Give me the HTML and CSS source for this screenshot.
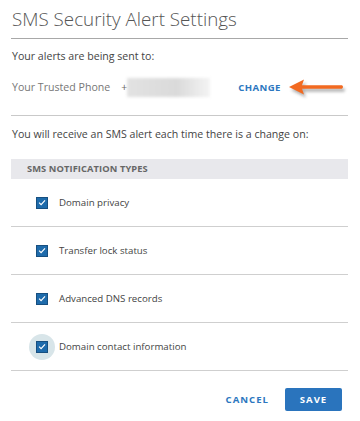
FILE: index.html
```html
<!DOCTYPE html>
<html>
<head>
<meta charset="utf-8">
<link rel="stylesheet" href="styles.css">
</head>
<body>
<div class="dialog">
  <h1 class="title">SMS Security Alert Settings</h1>
  <p class="lead">Your alerts are being sent to:</p>
  <div class="phone-row">
    <span class="phone-label">Your Trusted Phone</span>
    <span class="plus">+</span>
    <span class="phone-blur"></span>
    <a class="change">CHANGE</a>
    <svg class="arrow" width="62" height="24" viewBox="0 0 62 24">
      <defs>
        <filter id="sh" x="-20%" y="-50%" width="140%" height="200%">
          <feGaussianBlur stdDeviation="1.6"/>
        </filter>
      </defs>
      <g fill="#555" opacity="0.45" filter="url(#sh)" transform="translate(2,3)">
        <path d="M2 10 L17 2.5 L15 8.3 L55 8.3 Q57 10 55 11.7 L15 11.7 L17 17.5 Z"/>
      </g>
      <path fill="#f26a21" d="M2 10 L17 2.5 L15 8.3 L55 8.3 Q57 10 55 11.7 L15 11.7 L17 17.5 Z"/>
    </svg>
  </div>
  <p class="info">You will receive an SMS alert each time there is a change on:</p>
  <div class="types-head">SMS NOTIFICATION TYPES</div>
  <ul class="types">
    <li class="type"><span class="cb-wrap"><span class="cb"><svg viewBox="0 0 11 11" width="11" height="11"><path d="M2.3 5.6 L4.5 7.8 L8.8 3.2" fill="none" stroke="#fff" stroke-width="1.3"/></svg></span></span><span>Domain privacy</span></li>
    <li class="type"><span class="cb-wrap"><span class="cb"><svg viewBox="0 0 11 11" width="11" height="11"><path d="M2.3 5.6 L4.5 7.8 L8.8 3.2" fill="none" stroke="#fff" stroke-width="1.3"/></svg></span></span><span>Transfer lock status</span></li>
    <li class="type"><span class="cb-wrap"><span class="cb"><svg viewBox="0 0 11 11" width="11" height="11"><path d="M2.3 5.6 L4.5 7.8 L8.8 3.2" fill="none" stroke="#fff" stroke-width="1.3"/></svg></span></span><span>Advanced DNS records</span></li>
    <li class="type"><span class="cb-wrap focus"><span class="cb"><svg viewBox="0 0 11 11" width="11" height="11"><path d="M2.3 5.6 L4.5 7.8 L8.8 3.2" fill="none" stroke="#fff" stroke-width="1.3"/></svg></span></span><span>Domain contact information</span></li>
  </ul>
  <div class="actions">
    <button class="btn-cancel">CANCEL</button>
    <button class="btn-save">SAVE</button>
  </div>
</div>
</body>
</html>
```
FILE: styles.css
```css
* { box-sizing: border-box; }
html, body { margin: 0; padding: 0; background: #fff; }
body { font-family: "Open Sans", "Liberation Sans", sans-serif; color: #444; }
.dialog { width: 360px; padding: 0 12px 0 11px; }
.title {
  margin: 0;
  padding-top: 5px;
  padding-bottom: 5px;
  font-size: 18.8px;
  line-height: 28px;
  font-weight: 300;
  color: #555;
  border-bottom: 1px solid #a8a8a8;
  padding-left: 1px;
}
.lead { margin: 9px 0 0 1px; font-size: 10.6px; line-height: 16px; color: #444; }
.phone-row {
  display: flex;
  align-items: center;
  height: 20px;
  margin-top: 13px;
  font-size: 10.6px;
  padding-left: 1px;
  white-space: nowrap;
}
.phone-row > * { flex-shrink: 0; }
.phone-label { color: #777; }
.plus { color: #666; margin-left: 11px; }
.phone-blur {
  width: 83px; height: 19px; margin-left: 0;
  background: linear-gradient(90deg, #e2e2e2 0%, #dadada 60%, #f4f4f4 100%);
  filter: blur(1.5px);
}
.change {
  margin-left: 28px;
  font-size: 9.6px; font-weight: 700; letter-spacing: 0.4px; color: #2c77c0;
}
.arrow { margin-left: 6px; margin-top: 4px; }
.info {
  margin: 18px 0 0 0;
  padding-top: 10px;
  border-top: 1px solid #c9c9c9;
  font-size: 10.6px; line-height: 16px; color: #444;
  padding-left: 1px;
}
.types-head {
  margin-top: 17px;
  height: 20px;
  background: #e8e8ec;
  font-size: 9.3px; font-weight: 700; color: #666;
  line-height: 20px;
  padding-left: 16px;
  letter-spacing: 0.1px;
}
.types { list-style: none; margin: 0; padding: 0; }
.type {
  display: flex; align-items: center;
  height: 48px;
  border-bottom: 1px solid #cfcfcf;
  padding-left: 18px;
  font-size: 9.7px; color: #444;
}
.cb-wrap {
  width: 26px; height: 26px;
  border-radius: 50%;
  display: flex; align-items: center; justify-content: center;
  margin-right: 4px;
}
.cb-wrap.focus { background: #d8e5e9; }
.cb {
  width: 12px; height: 12px;
  background: #1e6bab;
  border: 1px solid #174f80;
  display: flex; align-items: center; justify-content: center;
}
.cb svg { display: block; }
.actions {
  display: flex; justify-content: flex-end; align-items: center;
  margin-top: 17px;
  padding-right: 6px;
}
.btn-cancel {
  background: none; border: 0; padding: 0;
  font-family: inherit; font-size: 9.6px; font-weight: 700; letter-spacing: 1px;
  color: #2c77c0;
  margin-right: 16px;
}
.btn-save {
  width: 57px; height: 23px;
  background: #2a74bd; border: 0; border-radius: 2px;
  font-family: inherit; font-size: 9.6px; font-weight: 700; letter-spacing: 1px;
  color: #fff;
}
```
